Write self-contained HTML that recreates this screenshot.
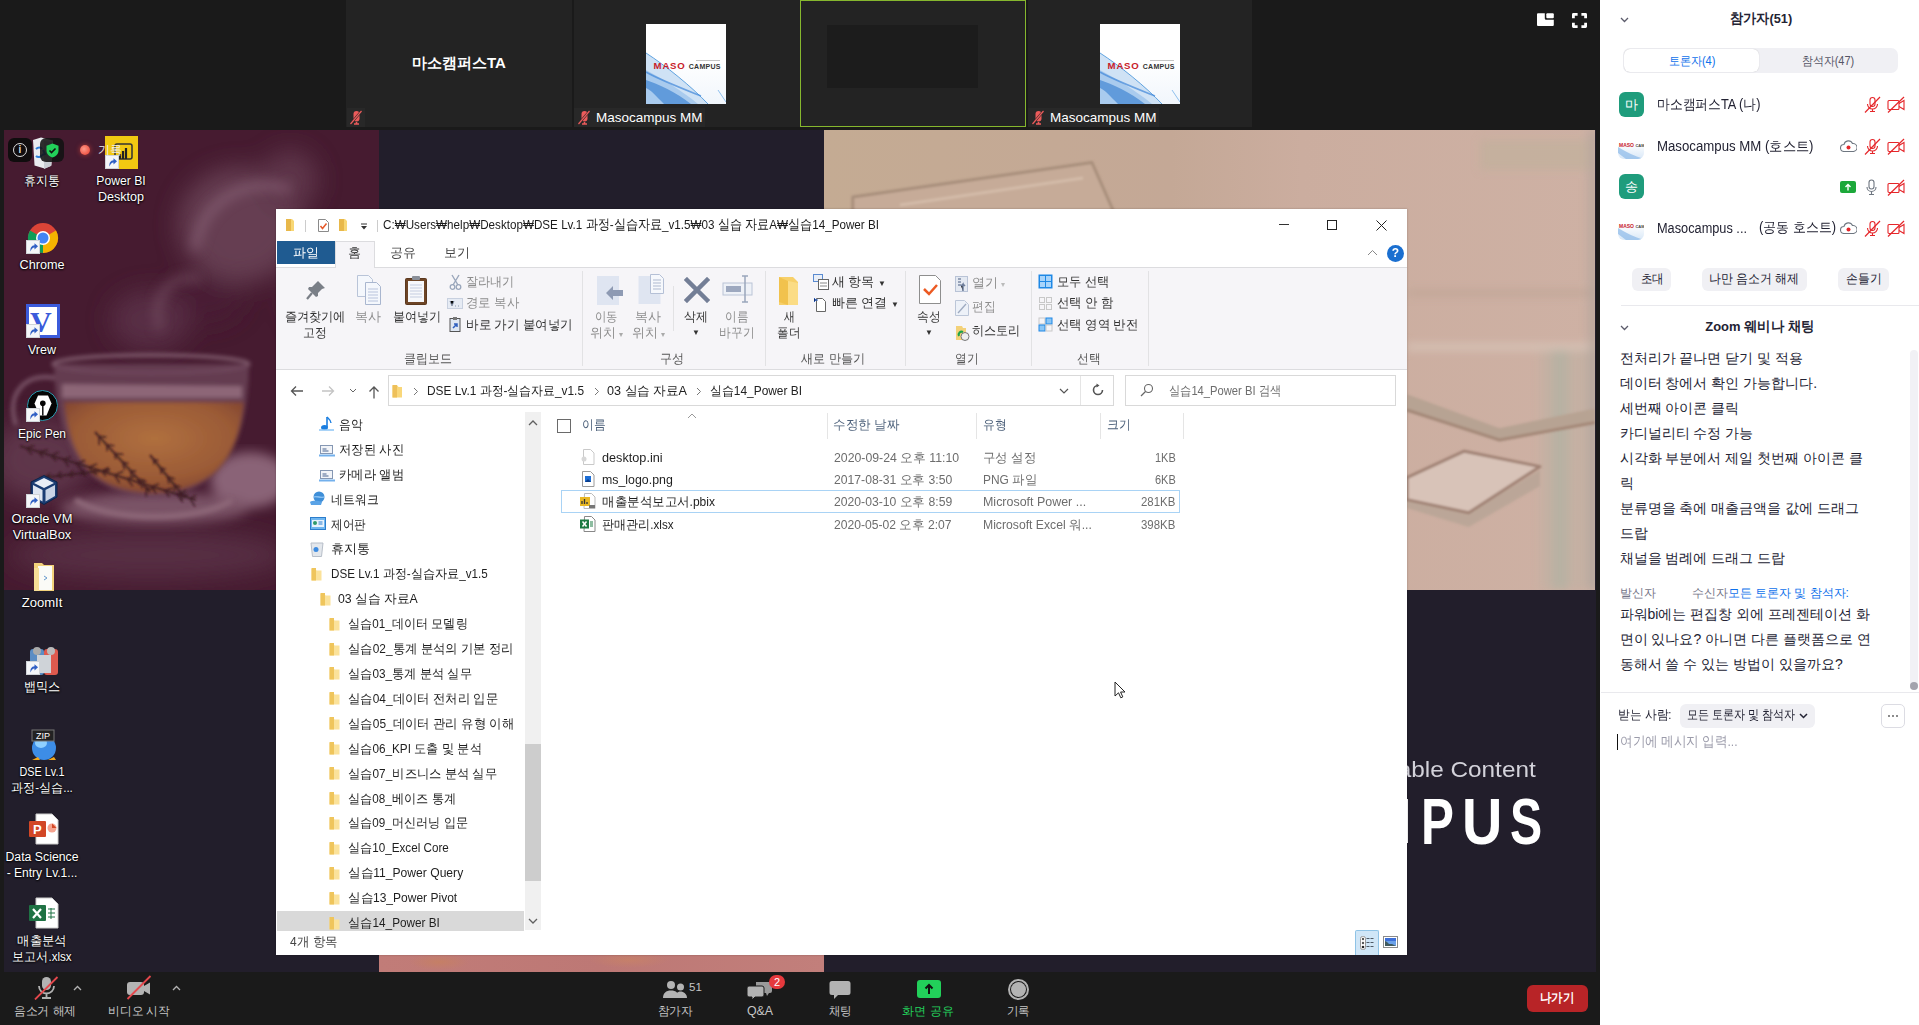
<!DOCTYPE html>
<html><head><meta charset="utf-8">
<style>
*{box-sizing:border-box;margin:0;padding:0}
html,body{width:1919px;height:1025px;overflow:hidden;background:#1a1a1a;font-family:"Liberation Sans",sans-serif;position:relative}
.a{position:absolute}
.t{position:absolute;white-space:nowrap;line-height:1}
/* top strip */
.tile{position:absolute;top:0;height:127px;background:#232323}
/* desktop */
#desk{position:absolute;left:4px;top:130px;width:1592px;height:840px;background:#221e2b;overflow:hidden}
/* explorer */
#ex{position:absolute;left:276px;top:209px;width:1131px;height:746px;background:#fff;font-size:12.5px;color:#222;box-shadow:0 0 2px rgba(0,0,0,.25)}
/* right panel */
#rp{position:absolute;left:1600px;top:0;width:319px;height:1025px;background:#fff;color:#232333}
/* toolbar */
#tb{position:absolute;left:0;top:970px;width:1600px;height:55px;background:#1a1a1a;color:#ccc}

.rb .t{font-size:12.5px;color:#333}
.rb .t.c{transform:translateX(-50%)}
.rb .t.g{color:#8d8d8d}
.rb .t.g2{color:#555}
.hd{font-size:12.5px;color:#4c607a}

.nv{font-size:12.5px;color:#1e1e1e}
.fn{font-size:12.5px;color:#1e1e1e}
.fd{font-size:12.5px;color:#6d6d6d}

.dl{font-size:12.5px;color:#fff;transform:translateX(-50%);text-shadow:0 0 2px #000,0 1px 2px #000}
#desk{height:842px}

.cm{position:absolute;left:19.5px;white-space:nowrap;line-height:1;font-size:14px;color:#232333}
#tb{top:972px;height:53px}
</style></head><body>

<!-- TOP STRIP -->
<div class="tile" style="left:346px;width:226px"></div>
<div class="t" style="left:459px;top:55px;font-size:15px;font-weight:bold;color:#fff;transform:translateX(-50%)">마소캠퍼스TA</div>
<div class="a" style="left:347px;top:108px;width:18px;height:19px;background:#282828"></div>
<svg class="a" style="left:349px;top:110px" width="14" height="15" viewBox="0 0 14 15"><path d="M4.5 4a3 3 0 0 1 6 0v4.5a3 3 0 0 1-6 0z" fill="#ec5b5b"/><path d="M7.5 12v1.5M5 14h5" stroke="#ec5b5b" stroke-width="1.6"/><path d="M12.5 1L1.5 14" stroke="#282828" stroke-width="2.4"/><path d="M12.5 1L1.5 14" stroke="#ec5b5b" stroke-width="1.2"/></svg>
<div class="tile" style="left:574px;width:226px"></div>
<div class="a" style="left:646px;top:24px;width:80px;height:80px;background:linear-gradient(180deg,#fff 0%,#fff 45%,#f1f6fc 100%);overflow:hidden">
    <svg class="a" style="left:0;top:0" width="80" height="80" viewBox="0 0 80 80">
      <path d="M0 29C20 42 45 62 62 80H0z" fill="#cfe2f5"/>
      <path d="M0 29C20 42 45 62 62 80" stroke="#5fa3e0" stroke-width="1" fill="none"/>
      <path d="M0 46C15 54 35 66 52 80H0z" fill="#a9cbee"/>
      <path d="M0 56C12 60 30 68 45 80H18C10 72 5 66 0 64z" fill="#4f8fd6" opacity=".8"/>
      <path d="M0 48C12 55 30 62 55 72" stroke="#3f86d8" stroke-width="1.6" fill="none" opacity=".7"/>
      <path d="M72 66L80 78" stroke="#8fc0ee" stroke-width="1" fill="none"/>
    </svg>
    <div class="t" style="left:7.6px;top:36.6px;font-size:9.6px;font-weight:bold;color:#c8202a;letter-spacing:0.8px">MASO</div>
    <div class="t" style="left:42.7px;top:38.8px;font-size:7px;font-weight:bold;color:#333;letter-spacing:0.3px">CAMPUS</div>
    <div class="a" style="left:50px;top:35.5px;width:24px;height:1px;background:#c4c4c4"></div>
  </div>
<div class="a" style="left:574px;top:108px;width:131px;height:19px;background:#282828"></div>
<svg class="a" style="left:577px;top:110px" width="14" height="15" viewBox="0 0 14 15"><path d="M4.5 4a3 3 0 0 1 6 0v4.5a3 3 0 0 1-6 0z" fill="#ec5b5b"/><path d="M7.5 12v1.5M5 14h5" stroke="#ec5b5b" stroke-width="1.6"/><path d="M12.5 1L1.5 14" stroke="#282828" stroke-width="2.4"/><path d="M12.5 1L1.5 14" stroke="#ec5b5b" stroke-width="1.2"/></svg>
<div class="t" style="left:596px;top:111px;font-size:13.5px;color:#fff">Masocampus MM</div>
<div class="tile" style="left:800px;width:226px;border:1px solid #86b72e"></div>
<div class="a" style="left:827px;top:25px;width:151px;height:63px;background:#1c1c1c"></div>
<div class="tile" style="left:1028px;width:224px"></div>
<div class="a" style="left:1100px;top:24px;width:80px;height:80px;background:linear-gradient(180deg,#fff 0%,#fff 45%,#f1f6fc 100%);overflow:hidden">
    <svg class="a" style="left:0;top:0" width="80" height="80" viewBox="0 0 80 80">
      <path d="M0 29C20 42 45 62 62 80H0z" fill="#cfe2f5"/>
      <path d="M0 29C20 42 45 62 62 80" stroke="#5fa3e0" stroke-width="1" fill="none"/>
      <path d="M0 46C15 54 35 66 52 80H0z" fill="#a9cbee"/>
      <path d="M0 56C12 60 30 68 45 80H18C10 72 5 66 0 64z" fill="#4f8fd6" opacity=".8"/>
      <path d="M0 48C12 55 30 62 55 72" stroke="#3f86d8" stroke-width="1.6" fill="none" opacity=".7"/>
      <path d="M72 66L80 78" stroke="#8fc0ee" stroke-width="1" fill="none"/>
    </svg>
    <div class="t" style="left:7.6px;top:36.6px;font-size:9.6px;font-weight:bold;color:#c8202a;letter-spacing:0.8px">MASO</div>
    <div class="t" style="left:42.7px;top:38.8px;font-size:7px;font-weight:bold;color:#333;letter-spacing:0.3px">CAMPUS</div>
    <div class="a" style="left:50px;top:35.5px;width:24px;height:1px;background:#c4c4c4"></div>
  </div>
<div class="a" style="left:1028px;top:108px;width:131px;height:19px;background:#282828"></div>
<svg class="a" style="left:1031px;top:110px" width="14" height="15" viewBox="0 0 14 15"><path d="M4.5 4a3 3 0 0 1 6 0v4.5a3 3 0 0 1-6 0z" fill="#ec5b5b"/><path d="M7.5 12v1.5M5 14h5" stroke="#ec5b5b" stroke-width="1.6"/><path d="M12.5 1L1.5 14" stroke="#282828" stroke-width="2.4"/><path d="M12.5 1L1.5 14" stroke="#ec5b5b" stroke-width="1.2"/></svg>
<div class="t" style="left:1050px;top:111px;font-size:13.5px;color:#fff">Masocampus MM</div>
<svg class="a" style="left:1536.5px;top:12.5px" width="17" height="13" viewBox="0 0 17 13"><path d="M1 0.3h6.8v5.2a1.3 1.3 0 0 0 1.3 1.3h7.7v5.2a1 1 0 0 1-1 1H1a1 1 0 0 1-1-1V1.3a1 1 0 0 1 1-1z" fill="#fff"/><rect x="9.3" y="0.3" width="7.5" height="5" rx="1" fill="#fff"/></svg>
<svg class="a" style="left:1571.5px;top:12.5px" width="15" height="15" viewBox="0 0 15 15"><path d="M1.4 5.2V1.4h4.2M9.4 1.4h4.2v3.8M13.6 9.8v3.8H9.4M5.6 13.6H1.4V9.8" stroke="#fff" stroke-width="2.8" fill="none" stroke-linejoin="round"/></svg>

<!-- DESKTOP -->
<div id="desk">
  <!-- tea wallpaper -->
  <svg class="a" style="left:0;top:0" width="375" height="460" viewBox="0 0 375 460">
    <defs>
      <filter id="bl2"><feGaussianBlur stdDeviation="2"/></filter><filter id="bl1"><feGaussianBlur stdDeviation="0.8"/></filter>
      <filter id="bl6"><feGaussianBlur stdDeviation="6"/></filter>
      <filter id="bl12"><feGaussianBlur stdDeviation="12"/></filter>
      <radialGradient id="teaG" cx=".5" cy=".4" r=".75"><stop offset="0" stop-color="#b0703f"/><stop offset=".6" stop-color="#9a5a36"/><stop offset="1" stop-color="#73392e"/></radialGradient>
    </defs>
    <rect width="375" height="460" fill="#461b30"/>
    <g filter="url(#bl12)" opacity=".85">
      <ellipse cx="236" cy="95" rx="62" ry="58" fill="#6c4559"/>
      <ellipse cx="286" cy="50" rx="28" ry="30" fill="#633a50"/>
      <ellipse cx="201" cy="170" rx="38" ry="24" fill="#4a1f34"/>
      <ellipse cx="146" cy="190" rx="40" ry="30" fill="#5c3248"/>
      <ellipse cx="326" cy="170" rx="40" ry="40" fill="#5e354b"/>
      <ellipse cx="36" cy="330" rx="50" ry="40" fill="#633a50"/>
      <ellipse cx="146" cy="425" rx="140" ry="25" fill="#5a3046"/>
    </g>
    <g filter="url(#bl6)" opacity=".6">
      <path d="M191 120 C196 70 246 45 286 60" stroke="#8a6478" stroke-width="10" fill="none"/>
      <path d="M156 200 C146 170 166 140 196 150" stroke="#7a5468" stroke-width="8" fill="none"/>
    </g>
    <g filter="url(#bl6)">
      <ellipse cx="246" cy="350" rx="40" ry="28" fill="#8a6477"/>
      <ellipse cx="151" cy="378" rx="95" ry="16" fill="#7a5266"/>
    </g>
    <g filter="url(#bl2)">
      <path d="M12 295 C2 265 20 242 51 248" stroke="#7a5468" stroke-width="4" fill="none"/>
      <ellipse cx="147" cy="234" rx="98" ry="9" fill="none" stroke="#8a6778" stroke-width="3"/>
      <path d="M50 234 C52 310 76 365 148 367 C221 365 244 310 245 234 z" fill="#6c4458" opacity=".8"/>
      <path d="M60 272 C66 332 91 362 148 363 C206 362 234 332 240 272 z" fill="url(#teaG)"/>
      <path d="M58 254 L238 256 L238 268 L58 268 z" fill="#9b7585" opacity=".75"/>
      <path d="M71 370 C106 392 196 392 228 370" stroke="#8c6677" stroke-width="6" fill="none"/>
    </g>
    <g fill="none" opacity=".85" filter="url(#bl1)"><path d="M16 316L192 370" stroke="#3a1a20" stroke-width="2"/><path d="M22.3 317.9L27.8 324.1" stroke="#3a1a20" stroke-width="1.6"/><path d="M22.3 317.9L30.4 315.6" stroke="#3a1a20" stroke-width="1.6"/><path d="M34.9 321.8L38.7 327.1" stroke="#3a1a20" stroke-width="1.6"/><path d="M34.9 321.8L44.0 320.1" stroke="#3a1a20" stroke-width="1.6"/><path d="M47.4 325.6L52.2 331.0" stroke="#3a1a20" stroke-width="1.6"/><path d="M47.4 325.6L54.6 322.2" stroke="#3a1a20" stroke-width="1.6"/><path d="M60.0 329.5L64.3 336.3" stroke="#3a1a20" stroke-width="1.6"/><path d="M60.0 329.5L66.4 327.1" stroke="#3a1a20" stroke-width="1.6"/><path d="M72.6 333.4L78.1 341.0" stroke="#3a1a20" stroke-width="1.6"/><path d="M72.6 333.4L81.1 330.5" stroke="#3a1a20" stroke-width="1.6"/><path d="M85.1 337.2L88.9 342.6" stroke="#3a1a20" stroke-width="1.6"/><path d="M85.1 337.2L93.0 334.0" stroke="#3a1a20" stroke-width="1.6"/><path d="M97.7 341.1L101.9 345.9" stroke="#3a1a20" stroke-width="1.6"/><path d="M97.7 341.1L105.0 337.8" stroke="#3a1a20" stroke-width="1.6"/><path d="M110.3 344.9L115.6 352.7" stroke="#3a1a20" stroke-width="1.6"/><path d="M110.3 344.9L119.2 341.4" stroke="#3a1a20" stroke-width="1.6"/><path d="M122.9 348.8L128.7 355.9" stroke="#3a1a20" stroke-width="1.6"/><path d="M122.9 348.8L132.1 345.9" stroke="#3a1a20" stroke-width="1.6"/><path d="M135.4 352.6L138.9 358.3" stroke="#3a1a20" stroke-width="1.6"/><path d="M135.4 352.6L142.4 351.2" stroke="#3a1a20" stroke-width="1.6"/><path d="M148.0 356.5L152.0 363.3" stroke="#3a1a20" stroke-width="1.6"/><path d="M148.0 356.5L154.9 354.0" stroke="#3a1a20" stroke-width="1.6"/><path d="M160.6 360.4L165.3 366.4" stroke="#3a1a20" stroke-width="1.6"/><path d="M160.6 360.4L168.7 358.1" stroke="#3a1a20" stroke-width="1.6"/><path d="M173.1 364.2L178.8 371.9" stroke="#3a1a20" stroke-width="1.6"/><path d="M173.1 364.2L182.2 360.8" stroke="#3a1a20" stroke-width="1.6"/><path d="M185.7 368.1L191.0 376.4" stroke="#3a1a20" stroke-width="1.6"/><path d="M185.7 368.1L192.2 365.6" stroke="#3a1a20" stroke-width="1.6"/><path d="M91 302L146 362" stroke="#3a1a20" stroke-width="2"/><path d="M94.9 306.3L95.2 315.0" stroke="#3a1a20" stroke-width="1.6"/><path d="M94.9 306.3L102.3 307.1" stroke="#3a1a20" stroke-width="1.6"/><path d="M102.8 314.9L103.2 321.1" stroke="#3a1a20" stroke-width="1.6"/><path d="M102.8 314.9L110.2 315.8" stroke="#3a1a20" stroke-width="1.6"/><path d="M110.6 323.4L111.7 329.1" stroke="#3a1a20" stroke-width="1.6"/><path d="M110.6 323.4L119.3 324.5" stroke="#3a1a20" stroke-width="1.6"/><path d="M118.5 332.0L120.5 339.9" stroke="#3a1a20" stroke-width="1.6"/><path d="M118.5 332.0L124.4 333.5" stroke="#3a1a20" stroke-width="1.6"/><path d="M126.4 340.6L127.9 348.5" stroke="#3a1a20" stroke-width="1.6"/><path d="M126.4 340.6L132.1 341.2" stroke="#3a1a20" stroke-width="1.6"/><path d="M134.2 349.1L134.8 354.9" stroke="#3a1a20" stroke-width="1.6"/><path d="M134.2 349.1L140.8 350.2" stroke="#3a1a20" stroke-width="1.6"/><path d="M142.1 357.7L142.3 366.4" stroke="#3a1a20" stroke-width="1.6"/><path d="M142.1 357.7L150.7 359.6" stroke="#3a1a20" stroke-width="1.6"/><path d="M146 325L181 368" stroke="#3a1a20" stroke-width="2"/><path d="M149.5 329.3L150.1 334.4" stroke="#3a1a20" stroke-width="1.6"/><path d="M149.5 329.3L154.3 330.5" stroke="#3a1a20" stroke-width="1.6"/><path d="M156.5 337.9L157.4 343.9" stroke="#3a1a20" stroke-width="1.6"/><path d="M156.5 337.9L161.7 339.2" stroke="#3a1a20" stroke-width="1.6"/><path d="M163.5 346.5L165.0 353.7" stroke="#3a1a20" stroke-width="1.6"/><path d="M163.5 346.5L170.7 348.9" stroke="#3a1a20" stroke-width="1.6"/><path d="M170.5 355.1L170.3 361.1" stroke="#3a1a20" stroke-width="1.6"/><path d="M170.5 355.1L176.6 356.9" stroke="#3a1a20" stroke-width="1.6"/><path d="M177.5 363.7L177.7 370.3" stroke="#3a1a20" stroke-width="1.6"/><path d="M177.5 363.7L183.9 365.4" stroke="#3a1a20" stroke-width="1.6"/><path d="M36 348L106 340" stroke="#3a1a20" stroke-width="2"/><path d="M41.8 347.3L46.2 350.5" stroke="#3a1a20" stroke-width="1.6"/><path d="M41.8 347.3L46.3 343.5" stroke="#3a1a20" stroke-width="1.6"/><path d="M53.5 346.0L58.0 348.0" stroke="#3a1a20" stroke-width="1.6"/><path d="M53.5 346.0L57.1 341.9" stroke="#3a1a20" stroke-width="1.6"/><path d="M65.2 344.7L68.9 346.7" stroke="#3a1a20" stroke-width="1.6"/><path d="M65.2 344.7L69.4 341.1" stroke="#3a1a20" stroke-width="1.6"/><path d="M76.8 343.3L82.1 345.3" stroke="#3a1a20" stroke-width="1.6"/><path d="M76.8 343.3L80.0 340.3" stroke="#3a1a20" stroke-width="1.6"/><path d="M88.5 342.0L93.1 344.7" stroke="#3a1a20" stroke-width="1.6"/><path d="M88.5 342.0L92.1 338.5" stroke="#3a1a20" stroke-width="1.6"/><path d="M100.2 340.7L105.2 343.8" stroke="#3a1a20" stroke-width="1.6"/><path d="M100.2 340.7L103.8 338.2" stroke="#3a1a20" stroke-width="1.6"/></g>
  </svg>
  <!-- beige photo -->
  <svg class="a" style="left:820px;top:0" width="771" height="460" viewBox="0 0 771 460">
    <defs>
      <linearGradient id="bg1" x1="0" x2="1"><stop offset="0" stop-color="#c4ab93"/><stop offset=".45" stop-color="#c4a896"/><stop offset=".62" stop-color="#cbad9f"/><stop offset="1" stop-color="#ceb1a4"/></linearGradient>
      <filter id="bb1"><feGaussianBlur stdDeviation="1.2"/></filter>
      <filter id="bb4"><feGaussianBlur stdDeviation="4"/></filter>
    </defs>
    <rect width="771" height="460" fill="url(#bg1)"/>
    <g filter="url(#bb4)">
      <rect x="656" y="10" width="110" height="30" fill="#bfb09b" opacity=".6"/>
      <rect x="583" y="160" width="188" height="6" fill="#b9a091" opacity=".6"/>
      <rect x="583" y="213" width="188" height="8" fill="#dccbc0" opacity=".6"/>
      <rect x="716" y="220" width="60" height="240" fill="#c0b0a4" opacity=".6"/>
      <rect x="728" y="220" width="16" height="240" fill="#b6b1a3" opacity=".9"/>
      <rect x="764" y="0" width="10" height="460" fill="#a8a09a" opacity=".5"/>
    </g>
    <g filter="url(#bb1)">
      <polygon points="28.8,67.0 267.9,32.5 289.8,82.0 28.0,82.0" fill="#c6ab98"/>
      <polyline points="28.8,82.0 28.8,67.0 267.9,32.5 289.8,82.0" fill="none" stroke="#a88f7c" stroke-width="3" stroke-linejoin="round"/>
      <polyline points="76.0,75.0 259.0,48.0" fill="none" stroke="#d3bba9" stroke-width="3"/>
      <polygon points="583.0,264.2 675.4,298.2 771.0,278.4 771.0,293.8 675.4,311.4 583.0,281.7" fill="#b7a393"/>
      <polyline points="583.0,280.0 675.4,310.0 771.0,292.5" fill="none" stroke="#a48878" stroke-width="3"/>
      <polygon points="583.0,378.0 644.7,397.0 716.0,356.0 716.0,340.0 644.7,382.7 583.0,369.6" fill="#b9a597" opacity=".9"/>
      <polygon points="583.0,347.6 640.3,321.2 716.0,336.6 644.7,382.7 583.0,369.6" fill="#d8c3b8" stroke="#a08274" stroke-width="3" stroke-linejoin="round"/>
    </g>
  </svg>
  <!-- pink strip -->
  <div class="a" style="left:375px;top:820px;width:445px;height:22px;background:radial-gradient(ellipse 30px 8px at 60px 12px,rgba(200,130,90,.6),transparent),radial-gradient(ellipse 40px 8px at 250px 10px,rgba(205,135,95,.5),transparent),linear-gradient(90deg,#c17c78,#bd7875 50%,#c27f7b)"></div>
  <!-- MASO CAMPUS text -->
  <div class="t" style="left:1325.5px;top:629px;font-size:22.5px;color:#d3d2da;transform:scaleX(1.082);transform-origin:left top">Actionable Content</div>
  <div class="a" style="left:1399px;top:668.5px;width:5px;height:44.5px;background:#fff"></div>
  <div class="t" style="left:1416.9px;top:659.5px;font-size:64.7px;font-weight:bold;color:#fff;transform:scaleX(.764);transform-origin:left top">P</div>
  <div class="t" style="left:1458.1px;top:659.5px;font-size:64.7px;font-weight:bold;color:#fff;transform:scaleX(.863);transform-origin:left top">U</div>
  <div class="t" style="left:1505.5px;top:659.5px;font-size:64.7px;font-weight:bold;color:#fff;transform:scaleX(.745);transform-origin:left top">S</div>
  <svg class="a" style="left:27px;top:6.5px" width="24" height="32" viewBox="0 0 24 32"><path d="M2 3l8-2.5 12 3-1.5 25-7 3-10-3z" fill="#e9ecef"/><path d="M13 4l8 1-1 24-7 3z" fill="#c9ced4"/><path d="M5 12c2-2 5-2 6 0M11 18c-1 2-4 3-6 1M12 13l2 4-3 1" stroke="#2d7fd8" stroke-width="2" fill="none"/></svg>
  <div class="a" style="left:4px;top:8px;width:23.5px;height:23.5px;border-radius:6px;background:rgba(12,12,12,.92)"></div>
  <div class="a" style="left:8.8px;top:12.8px;width:14.4px;height:14.4px;border-radius:50%;border:1.2px solid #ddd;color:#ddd;font-size:10px;line-height:12px;text-align:center;font-weight:bold">i</div>
  <div class="a" style="left:36.4px;top:8px;width:23.6px;height:23.5px;border-radius:6px;background:rgba(18,18,18,.88)"></div>
  <svg class="a" style="left:41.6px;top:12.5px" width="13" height="15" viewBox="0 0 13 15"><path d="M6.5 0.5L12.5 2.8V7.5c0 3.4-2.6 6-6 7C3.1 13.5 0.5 10.9 0.5 7.5V2.8z" fill="#22d05a"/><path d="M3.5 7.5l2 2 4-4" stroke="#111" stroke-width="1.6" fill="none"/></svg>
  <div class="a" style="left:76px;top:15px;width:10px;height:10px;border-radius:50%;background:radial-gradient(circle at 40% 40%,#ff9a8a,#e83a2a);box-shadow:0 0 5px rgba(255,80,60,.6)"></div>
  <div class="a" style="left:100.8px;top:6px;width:33.2px;height:33px;background:#f2c811"></div>
  <svg class="a" style="left:108px;top:12px" width="22" height="20" viewBox="0 0 22 20"><rect x="3" y="2" width="17" height="15" rx="2" fill="none" stroke="#333" stroke-width="1.5"/><path d="M8 17v-5M11 17V9M14 17V6" stroke="#222" stroke-width="2.2"/></svg>
  <svg class="a" style="left:101px;top:25.3px" width="14" height="14" viewBox="0 0 14 14"><rect x="0.5" y="0.5" width="13" height="13" fill="#f4f6f8" stroke="#d0d4d8"/><path d="M4.5 11.5C4 8 5.5 5.5 8.5 5.2V3.2L12 6.3 8.5 9.4V7.4C6.5 7.5 5.2 9 4.5 11.5z" fill="#2f5fc4"/></svg>
  <div class="t" style="left:94.4px;top:13.5px;font-size:12px;color:#eee">기록</div>
  <div class="t dl" style="left:38px;top:44.5px;transform:translateX(-50%) scaleX(0.917949);transform-origin:center top">휴지통</div>
  <div class="t dl" style="left:117px;top:44.5px;transform:translateX(-50%) scaleX(0.973999);transform-origin:center top">Power BI</div>
  <div class="t dl" style="left:117px;top:60.5px;transform:translateX(-50%) scaleX(1.00525);transform-origin:center top">Desktop</div>
  <svg class="a" style="left:23px;top:92px" width="32" height="32" viewBox="0 0 32 32"><circle cx="16" cy="16" r="15" fill="#db4437"/><path d="M16 16L3 23.5A15 15 0 0 0 16 31z" fill="#0f9d58"/><path d="M16 16L3 23.5A15 15 0 0 1 3 8.5z" fill="#0f9d58"/><path d="M16 16l13-7.5A15 15 0 0 1 16 31z" fill="#f4b400"/><circle cx="16" cy="16" r="7" fill="#fff"/><circle cx="16" cy="16" r="5.5" fill="#4285f4"/></svg>
  <svg class="a" style="left:22px;top:109.5px" width="14" height="14" viewBox="0 0 14 14"><rect x="0.5" y="0.5" width="13" height="13" fill="#f4f6f8" stroke="#d0d4d8"/><path d="M4.5 11.5C4 8 5.5 5.5 8.5 5.2V3.2L12 6.3 8.5 9.4V7.4C6.5 7.5 5.2 9 4.5 11.5z" fill="#2f5fc4"/></svg>
  <div class="t dl" style="left:38px;top:128.5px;transform:translateX(-50%) scaleX(1.01195);transform-origin:center top">Chrome</div>
  <div class="a" style="left:22px;top:174px;width:34px;height:34px;background:#fff;border:3px solid #3b5bdb"></div>
  <div class="t" style="left:26px;top:177px;font-size:30px;font-weight:bold;color:#3b5bdb;font-family:Liberation Serif,serif">V</div>
  <svg class="a" style="left:22px;top:194px" width="14" height="14" viewBox="0 0 14 14"><rect x="0.5" y="0.5" width="13" height="13" fill="#f4f6f8" stroke="#d0d4d8"/><path d="M4.5 11.5C4 8 5.5 5.5 8.5 5.2V3.2L12 6.3 8.5 9.4V7.4C6.5 7.5 5.2 9 4.5 11.5z" fill="#2f5fc4"/></svg>
  <div class="t dl" style="left:38px;top:213.5px;transform:translateX(-50%) scaleX(0.999442);transform-origin:center top">Vrew</div>
  <div class="a" style="left:23.3px;top:260.3px;width:31px;height:31px;border-radius:50%;background:#050505;border:1.6px solid #2a9bb0"></div>
  <svg class="a" style="left:30px;top:265px" width="18" height="22" viewBox="0 0 18 22"><path d="M4 0.5h10l3.5 8-5 12h-7l-5-12z" fill="#fff"/><circle cx="8.8" cy="8.2" r="2.8" fill="#050505"/><path d="M8.8 9v11.5" stroke="#050505" stroke-width="1.4"/></svg>
  <svg class="a" style="left:22.4px;top:278px" width="14" height="14" viewBox="0 0 14 14"><rect x="0.5" y="0.5" width="13" height="13" fill="#f4f6f8" stroke="#d0d4d8"/><path d="M4.5 11.5C4 8 5.5 5.5 8.5 5.2V3.2L12 6.3 8.5 9.4V7.4C6.5 7.5 5.2 9 4.5 11.5z" fill="#2f5fc4"/></svg>
  <div class="t dl" style="left:38px;top:297.5px;transform:translateX(-50%) scaleX(0.961399);transform-origin:center top">Epic Pen</div>
  <svg class="a" style="left:25px;top:344px" width="30" height="32" viewBox="0 0 30 32"><path d="M15 1.5l13 6.5v15l-13 7.5-13-7.5V8z" fill="#1b3d73" stroke="#0e2347" stroke-width="1"/><path d="M15 4l10 5-10 5L5 9z" fill="#e9eef6"/><path d="M4 11l9.5 5v11.5L4 22z" fill="#dfe6f1"/><path d="M26 11l-9.5 5v11.5L26 22z" fill="#c9d4e6"/></svg>
  <svg class="a" style="left:21.5px;top:363.5px" width="14" height="14" viewBox="0 0 14 14"><rect x="0.5" y="0.5" width="13" height="13" fill="#f4f6f8" stroke="#d0d4d8"/><path d="M4.5 11.5C4 8 5.5 5.5 8.5 5.2V3.2L12 6.3 8.5 9.4V7.4C6.5 7.5 5.2 9 4.5 11.5z" fill="#2f5fc4"/></svg>
  <div class="t dl" style="left:38px;top:382.5px;transform:translateX(-50%) scaleX(1.02969);transform-origin:center top">Oracle VM</div>
  <div class="t dl" style="left:38px;top:398.5px;transform:translateX(-50%) scaleX(1.0326);transform-origin:center top">VirtualBox</div>
  <svg class="a" style="left:28px;top:430px" width="24" height="32" viewBox="0 0 24 32"><path d="M2 3h8l2 2h10v26H2z" fill="#f3d27b"/><path d="M6 6h14v24H6z" fill="#fbfbf7"/><path d="M2 8h5v23H2z" fill="#f7de96"/><path d="M12 16l3 2-3 2" stroke="#69c" fill="none"/></svg>
  <div class="t dl" style="left:38px;top:466.5px;transform:translateX(-50%) scaleX(1.0461);transform-origin:center top">ZoomIt</div>
  <svg class="a" style="left:24px;top:515px" width="32" height="32" viewBox="0 0 32 32"><rect x="2" y="4" width="14" height="26" rx="3" fill="#5c8dc4"/><rect x="16" y="4" width="14" height="26" rx="3" fill="#de5a4e"/><path d="M9 10h14v18H9z" fill="#cfd3d8"/><circle cx="9" cy="6" r="4" fill="#aaa"/><circle cx="23" cy="6" r="4" fill="#bbb"/></svg>
  <svg class="a" style="left:22px;top:531px" width="14" height="14" viewBox="0 0 14 14"><rect x="0.5" y="0.5" width="13" height="13" fill="#f4f6f8" stroke="#d0d4d8"/><path d="M4.5 11.5C4 8 5.5 5.5 8.5 5.2V3.2L12 6.3 8.5 9.4V7.4C6.5 7.5 5.2 9 4.5 11.5z" fill="#2f5fc4"/></svg>
  <div class="t dl" style="left:38px;top:550.5px;transform:translateX(-50%) scaleX(0.935897);transform-origin:center top">뱁믹스</div>
  <svg class="a" style="left:24px;top:598px" width="32" height="34" viewBox="0 0 32 34"><ellipse cx="16" cy="20" rx="12" ry="12" fill="#3d8de6"/><ellipse cx="13" cy="15" rx="6" ry="5" fill="#8fd0ff"/><path d="M4 32h8l-2-3zM20 32h8l-2-3z" fill="#f0a81e"/><rect x="4" y="2" width="22" height="11" fill="#222" stroke="#777"/><text x="8" y="11" font-size="9" fill="#fff" font-family="Liberation Sans">ZIP</text></svg>
  <div class="t dl" style="left:38px;top:635.5px;transform:translateX(-50%) scaleX(0.865542);transform-origin:center top">DSE Lv.1</div>
  <div class="t dl" style="left:38px;top:651.5px;transform:translateX(-50%) scaleX(0.926513);transform-origin:center top">과정-실습...</div>
  <svg class="a" style="left:24px;top:683px" width="32" height="32" viewBox="0 0 32 32"><path d="M8 1h16l6 6v24H8z" fill="#fff" stroke="#ccc"/><rect x="1" y="8" width="17" height="16" rx="1" fill="#d24726"/><text x="5" y="21" font-size="13" font-weight="bold" fill="#fff" font-family="Liberation Sans">P</text><circle cx="24" cy="15" r="4.5" fill="#f5a38f"/><path d="M24 10.5V15h4.5" fill="#d24726"/></svg>
  <div class="t dl" style="left:38px;top:720.5px;transform:translateX(-50%) scaleX(0.981719);transform-origin:center top">Data Science</div>
  <div class="t dl" style="left:38px;top:736.5px;transform:translateX(-50%) scaleX(0.963133);transform-origin:center top">- Entry Lv.1...</div>
  <svg class="a" style="left:24px;top:767px" width="32" height="32" viewBox="0 0 32 32"><path d="M8 1h16l6 6v24H8z" fill="#fff" stroke="#ccc"/><rect x="1" y="8" width="17" height="16" rx="1" fill="#1f7244"/><path d="M5 12l8 9M13 12l-8 9" stroke="#fff" stroke-width="2.2"/><path d="M20 12h7M20 16h7M20 20h7M23 11v11" stroke="#1f7244"/></svg>
  <div class="t dl" style="left:38px;top:804.5px;transform:translateX(-50%) scaleX(0.957692);transform-origin:center top">매출분석</div>
  <div class="t dl" style="left:38px;top:820.5px;transform:translateX(-50%) scaleX(0.923438);transform-origin:center top">보고서.xlsx</div>
</div>

<!-- EXPLORER -->

<div id="ex">
  <!-- title bar -->
  <svg class="a" style="left:9px;top:9px" width="12" height="14" viewBox="0 0 12 14"><path d="M1 1h6l2 2v10H1z" fill="#f8d775"/><path d="M1 1h5v12H1z" fill="#e8b84a"/></svg>
  <div class="a" style="left:29px;top:11px;width:1px;height:12px;background:#ccc"></div>
  <svg class="a" style="left:41px;top:9px" width="13" height="15" viewBox="0 0 13 15"><path d="M1.5 1.5h7l3 3v9h-10z" fill="#fff" stroke="#8a8a8a"/><path d="M3.5 8l2 2.5 4-5" stroke="#e65a2a" stroke-width="1.5" fill="none"/></svg>
  <svg class="a" style="left:62px;top:9px" width="12" height="14" viewBox="0 0 12 14"><path d="M1 1h6l2 2v10H1z" fill="#f8d775"/><path d="M1 1h5v12H1z" fill="#e8b84a"/></svg>
  <svg class="a" style="left:84px;top:14px" width="8" height="7" viewBox="0 0 8 7"><path d="M1 1h6" stroke="#333"/><path d="M1 3h6L4 6.5z" fill="#333"/></svg>
  <div class="a" style="left:101px;top:11px;width:1px;height:12px;background:#ccc"></div>
  <div class="t" style="left:107px;top:9px;font-size:13.5px;color:#1a1a1a;transform:scaleX(0.863547);transform-origin:left top">C:₩Users₩help₩Desktop₩DSE Lv.1 과정-실습자료_v1.5₩03 실습 자료A₩실습14_Power BI</div>
  <div class="a" style="left:1003px;top:15px;width:10px;height:1px;background:#333"></div>
  <div class="a" style="left:1051px;top:11px;width:10px;height:10px;border:1px solid #222"></div>
  <svg class="a" style="left:1099.5px;top:10.5px" width="11" height="11" viewBox="0 0 11 11"><path d="M0.5 0.5L10.5 10.5M10.5 0.5L0.5 10.5" stroke="#222" stroke-width="1"/></svg>
  <!-- tabs -->
  <div class="a" style="left:1px;top:32px;width:58px;height:23px;background:#1f5b91"></div>
  <div class="t" style="left:17px;top:37px;font-size:13px;color:#fff">파일</div>
  <div class="a" style="left:59px;top:32px;width:40px;height:27px;background:#f6f5f8;border:1px solid #dcdcdf;border-bottom:none;z-index:2"></div>
  <div class="t" style="left:72px;top:37px;font-size:13px;color:#333;z-index:3">홈</div>
  <div class="t" style="left:114px;top:37px;font-size:13px;color:#444">공유</div>
  <div class="t" style="left:168px;top:37px;font-size:13px;color:#444">보기</div>
  <svg class="a" style="left:1091px;top:40px" width="11" height="7" viewBox="0 0 11 7"><path d="M1 6l4.5-4.5L10 6" stroke="#888" fill="none"/></svg>
  <div class="a" style="left:1111px;top:36px;width:17px;height:17px;border-radius:50%;background:#1a6fd0;color:#fff;font-size:12px;font-weight:bold;text-align:center;line-height:17px">?</div>
  <!-- ribbon -->
  <div class="a" style="left:0;top:58px;width:1131px;height:103px;background:#f6f5f8;border-top:1px solid #dcdcdf;border-bottom:1px solid #dcdcdf"></div>
  <div class="a" style="left:306px;top:62px;width:1px;height:95px;background:#e2e2e4"></div>
  <div class="a" style="left:489px;top:62px;width:1px;height:95px;background:#e2e2e4"></div>
  <div class="a" style="left:629px;top:62px;width:1px;height:95px;background:#e2e2e4"></div>
  <div class="a" style="left:755px;top:62px;width:1px;height:95px;background:#e2e2e4"></div>
  <div class="a" style="left:872px;top:62px;width:1px;height:95px;background:#e2e2e4"></div>
  <div class="a" style="left:397px;top:77px;width:1px;height:45px;background:#e2e2e4"></div>
  <div class="rb">
  <!-- clipboard group -->
  <svg class="a" style="left:29px;top:70px" width="22" height="22" viewBox="0 0 22 22"><path d="M13 2l7 7-3 1-4 4 0 3-2 1-8-8 1-2 3 0 4-4z" fill="#7a7f87"/><path d="M7 14L2 20" stroke="#7a7f87" stroke-width="2.2"/></svg>
  <div class="t c" style="left:39px;top:102px;transform:translateX(-50%) scaleX(0.938462);transform-origin:center top">즐겨찾기에</div>
  <div class="t c" style="left:39px;top:118px;transform:translateX(-50%) scaleX(0.919231);transform-origin:center top">고정</div>
  <svg class="a" style="left:80px;top:65px" width="27" height="32" viewBox="0 0 27 32"><path d="M1.5 1.5h11l4 4v17h-15z" fill="#f4f7fc" stroke="#b9c4d8"/><path d="M9.5 8.5h11l4 4v18h-15z" fill="#f4f7fc" stroke="#a9b6cf"/><path d="M12 15h10M12 18h10M12 21h10M12 24h10M12 27h10" stroke="#b8c3dc"/></svg>
  <div class="t c g" style="left:92px;top:102px">복사</div>
  <svg class="a" style="left:128px;top:65px" width="24" height="32" viewBox="0 0 24 32"><rect x="1.5" y="4.5" width="21" height="26" rx="1" fill="#6e4526" stroke="#5b381e"/><rect x="4" y="7" width="16" height="21" fill="#f7f8fb"/><path d="M6 11h12M6 14h12M6 17h12M6 20h12M6 23h12" stroke="#c5cde0"/><rect x="8" y="2" width="8" height="4" rx="1" fill="#8a8f99"/></svg>
  <div class="t c" style="left:141px;top:102px;transform:translateX(-50%) scaleX(0.932692);transform-origin:center top">붙여넣기</div>
  <svg class="a" style="left:173px;top:65px" width="13" height="16" viewBox="0 0 13 16"><path d="M3 1l6 10M10 1L4 11" stroke="#9aa6bb" stroke-width="1.4"/><circle cx="3.5" cy="13" r="2.3" fill="none" stroke="#9aa6bb" stroke-width="1.3"/><circle cx="9.5" cy="13" r="2.3" fill="none" stroke="#9aa6bb" stroke-width="1.3"/></svg>
  <div class="t g" style="left:190px;top:67px;transform:scaleX(0.930769);transform-origin:left top">잘라내기</div>
  <svg class="a" style="left:171px;top:89px" width="16" height="11" viewBox="0 0 16 11"><rect x="0.5" y="0.5" width="15" height="10" fill="#e6ebf4" stroke="#c8d0df"/><path d="M3 3l2 5 2-5M8 8h1M11 8h1" stroke="#8a97ad"/></svg>
  <div class="t g" style="left:190px;top:88px;transform:scaleX(0.955224);transform-origin:left top">경로 복사</div>
  <svg class="a" style="left:173px;top:107px" width="12" height="16" viewBox="0 0 12 16"><rect x="1" y="2.5" width="10" height="13" fill="#dfe7f3" stroke="#555"/><rect x="4" y="1" width="4" height="3" fill="#777"/><path d="M4 12l4-4M5 8h3v3" stroke="#2f5fbf" stroke-width="1.5" fill="none"/></svg>
  <div class="t" style="left:190px;top:110px;transform:scaleX(0.964371);transform-origin:left top">바로 가기 붙여넣기</div>
  <div class="t c g2" style="left:152px;top:144px;transform:translateX(-50%) scaleX(0.923077);transform-origin:center top">클립보드</div>
  <!-- organize -->
  <svg class="a" style="left:320px;top:66px" width="28" height="31" viewBox="0 0 28 31"><rect x="1" y="1" width="22" height="29" fill="#dfe5f1"/><path d="M10 18l7-7v4h10v6H17v4z" fill="#8e9ab3"/></svg>
  <div class="t c g" style="left:330px;top:102px;transform:translateX(-50%) scaleX(0.873077);transform-origin:center top">이동</div>
  <div class="t c g" style="left:330.5px;top:118px">위치 <span style="font-size:8px;color:#aaa">▾</span></div>
  <svg class="a" style="left:362px;top:65px" width="28" height="31" viewBox="0 0 28 31"><rect x="0.5" y="2" width="22" height="28" fill="#dfe5f1"/><path d="M12.5 0.5h9l4 4v15h-13z" fill="#f6f8fc" stroke="#b5c0d6"/><path d="M15 6h8M15 9h8M15 12h8M15 15h8" stroke="#aeb9cf"/></svg>
  <div class="t c g" style="left:372px;top:102px">복사</div>
  <div class="t c g" style="left:372.5px;top:118px">위치 <span style="font-size:8px;color:#aaa">▾</span></div>
  <svg class="a" style="left:408px;top:68px" width="26" height="26" viewBox="0 0 26 26"><path d="M3 3L23 23M23 3L3 23" stroke="#737e96" stroke-width="4.5" stroke-linecap="square"/></svg>
  <div class="t c" style="left:420px;top:102px;transform:translateX(-50%) scaleX(0.915385);transform-origin:center top">삭제</div>
  <div class="t c" style="left:420px;top:120px;font-size:8px">▼</div>
  <svg class="a" style="left:722px;top:66px;left:446px" width="31" height="28" viewBox="0 0 31 28"><rect x="1" y="8" width="29" height="12" fill="#eef1f7" stroke="#bac4d6"/><rect x="4" y="11" width="15" height="6" fill="#9da8bf"/><path d="M20 1h6M23 1v26M20 27h6" stroke="#9aa6bc" stroke-width="1.5"/></svg>
  <div class="t c g" style="left:461px;top:102px;transform:translateX(-50%) scaleX(0.888462);transform-origin:center top">이름</div>
  <div class="t c g" style="left:461px;top:118px;transform:translateX(-50%) scaleX(0.902564);transform-origin:center top">바꾸기</div>
  <div class="t c g2" style="left:396px;top:144px;transform:translateX(-50%) scaleX(0.930769);transform-origin:center top">구성</div>
  <!-- new -->
  <svg class="a" style="left:502px;top:67px" width="21" height="30" viewBox="0 0 21 30"><path d="M1 1h14l5 5v23H1z" fill="#f7d06a"/><path d="M1 1l9 4v24l-9-3z" fill="#f1c24d"/><path d="M10 5l10 2v22H10z" fill="#fbdc85"/></svg>
  <div class="t c" style="left:513px;top:102px;transform:translateX(-50%) scaleX(0.838462);transform-origin:center top">새</div>
  <div class="t c" style="left:513px;top:118px;transform:translateX(-50%) scaleX(0.888462);transform-origin:center top">폴더</div>
  <svg class="a" style="left:537px;top:65px" width="16" height="16" viewBox="0 0 16 16"><rect x="0.5" y="0.5" width="9" height="7" fill="#e9eef7" stroke="#5a8ad0"/><rect x="5.5" y="5.5" width="10" height="10" fill="#fff" stroke="#666"/><path d="M7 9h7M7 12h7" stroke="#888"/></svg>
  <div class="t" style="left:556px;top:67px">새 항목 <span style="font-size:8px">▼</span></div>
  <svg class="a" style="left:537px;top:87px" width="14" height="16" viewBox="0 0 14 16"><path d="M3.5 2.5h6l3 3v10h-9z" fill="#fff" stroke="#666"/><path d="M1 4h4M1 2l2 2-2 2" stroke="#2c5fc0"/></svg>
  <div class="t" style="left:556px;top:88px">빠른 연결 <span style="font-size:8px">▼</span></div>
  <div class="t c g2" style="left:557px;top:144px;transform:translateX(-50%) scaleX(0.93598);transform-origin:center top">새로 만들기</div>
  <!-- open -->
  <svg class="a" style="left:642px;top:65px" width="24" height="31" viewBox="0 0 24 31"><path d="M1.5 1.5h16l5 5v23h-21z" fill="#fff" stroke="#8e8e8e"/><path d="M6 15l5 5 8-9" stroke="#ec5a23" stroke-width="2.5" fill="none"/></svg>
  <div class="t c" style="left:653px;top:102px;transform:translateX(-50%) scaleX(0.9);transform-origin:center top">속성</div>
  <div class="t c" style="left:653px;top:120px;font-size:8px">▼</div>
  <svg class="a" style="left:679px;top:67px" width="14" height="16" viewBox="0 0 14 16"><rect x="0.5" y="0.5" width="12" height="15" fill="#e4e9f2" stroke="#b9c3d6"/><path d="M3 3h3M3 6h3M3 9h3" stroke="#7c8aa6" stroke-width="1.5"/><path d="M8 15V8l-2 2M8 8l2 2" stroke="#6f7f9c" stroke-width="1.5"/></svg>
  <div class="t g" style="left:696px;top:68px">열기 <span style="font-size:8px;color:#bbb">▾</span></div>
  <svg class="a" style="left:679px;top:91px" width="14" height="16" viewBox="0 0 14 16"><path d="M0.5 0.5h9l4 4v11H0.5z" fill="#edf1f8" stroke="#bcc6d8"/><path d="M3 13l8-9" stroke="#9eaac0" stroke-width="1.3"/></svg>
  <div class="t g" style="left:696px;top:92px;transform:scaleX(0.9);transform-origin:left top">편집</div>
  <svg class="a" style="left:679px;top:116px" width="15" height="16" viewBox="0 0 15 16"><path d="M1 1h6l1 2h3v12H1z" fill="#f3d179"/><circle cx="10" cy="11.5" r="4" fill="#eee" stroke="#777"/><path d="M4 11a3 3 0 0 1 4 -4" stroke="#1ca34a" stroke-width="2.2" fill="none"/></svg>
  <div class="t" style="left:696px;top:116px;transform:scaleX(0.932692);transform-origin:left top">히스토리</div>
  <div class="t c g2" style="left:691px;top:144px;transform:translateX(-50%) scaleX(0.9);transform-origin:center top">열기</div>
  <!-- select -->
  <svg class="a" style="left:762px;top:65px" width="15" height="15" viewBox="0 0 15 15"><rect x="0.5" y="0.5" width="14" height="14" fill="#1e88e5"/><rect x="2" y="2" width="5" height="5" fill="#a8d4fb"/><rect x="8" y="2" width="5" height="5" fill="#a8d4fb"/><rect x="2" y="8" width="5" height="5" fill="#a8d4fb"/><rect x="8" y="8" width="5" height="5" fill="#a8d4fb"/></svg>
  <div class="t" style="left:781px;top:67px;transform:scaleX(0.94441);transform-origin:left top">모두 선택</div>
  <svg class="a" style="left:762px;top:87px" width="15" height="15" viewBox="0 0 15 15"><rect x="1.5" y="1.5" width="5" height="5" fill="none" stroke="#c8c8c8"/><rect x="8.5" y="1.5" width="5" height="5" fill="none" stroke="#c8c8c8"/><rect x="1.5" y="8.5" width="5" height="5" fill="none" stroke="#c8c8c8"/><rect x="8.5" y="8.5" width="5" height="5" fill="none" stroke="#c8c8c8"/></svg>
  <div class="t" style="left:781px;top:88px;transform:scaleX(0.954996);transform-origin:left top">선택 안 함</div>
  <svg class="a" style="left:762px;top:108px" width="15" height="15" viewBox="0 0 15 15"><rect x="1" y="1" width="6" height="6" fill="none" stroke="#c8c8c8"/><rect x="8" y="1" width="6" height="6" fill="#8cc6f5" stroke="#1e88e5"/><rect x="1" y="8" width="6" height="6" fill="#8cc6f5" stroke="#1e88e5"/><rect x="8" y="8" width="6" height="6" fill="none" stroke="#c8c8c8"/></svg>
  <div class="t" style="left:781px;top:110px;transform:scaleX(0.956998);transform-origin:left top">선택 영역 반전</div>
  <div class="t c g2" style="left:813px;top:144px;transform:translateX(-50%) scaleX(0.907692);transform-origin:center top">선택</div>
  </div>
  <!-- address row -->
  <svg class="a" style="left:14px;top:176px" width="14" height="12" viewBox="0 0 14 12"><path d="M13 6H2M6 1.5L1.5 6 6 10.5" stroke="#555" stroke-width="1.3" fill="none"/></svg>
  <svg class="a" style="left:45px;top:176px" width="14" height="12" viewBox="0 0 14 12"><path d="M1 6h11M8 1.5L12.5 6 8 10.5" stroke="#c4c4c4" stroke-width="1.3" fill="none"/></svg>
  <svg class="a" style="left:73px;top:179px" width="8" height="6" viewBox="0 0 8 6"><path d="M1 1l3 3 3-3" stroke="#666" fill="none"/></svg>
  <svg class="a" style="left:92px;top:176px" width="12" height="14" viewBox="0 0 12 14"><path d="M6 13.5V2M1.5 6.5L6 2l4.5 4.5" stroke="#555" stroke-width="1.3" fill="none"/></svg>
  <div class="a" style="left:112px;top:166px;width:726px;height:31px;border:1px solid #d9d9d9;background:#fff"></div>
  <div class="a" style="left:804px;top:167px;width:1px;height:29px;background:#e5e5e5"></div>
  <svg class="a" style="left:116px;top:175px" width="11" height="14" viewBox="0 0 11 14"><path d="M0.5 1.5h5l1 1.5h3.5v10.5H0.5z" fill="#f9d77a"/><path d="M0.5 1h4.5v12.5H0.5z" fill="#eec05a"/></svg>
  <svg class="a" style="left:137px;top:178px" width="6" height="9" viewBox="0 0 6 9"><path d="M1 1l3.5 3.5L1 8" stroke="#777" fill="none"/></svg>
  <div class="t" style="left:151px;top:175px;font-size:13px;transform:scaleX(0.914369);transform-origin:left top">DSE Lv.1 과정-실습자료_v1.5</div>
  <svg class="a" style="left:318px;top:178px" width="6" height="9" viewBox="0 0 6 9"><path d="M1 1l3.5 3.5L1 8" stroke="#777" fill="none"/></svg>
  <div class="t" style="left:331px;top:175px;font-size:13px;transform:scaleX(0.971353);transform-origin:left top">03 실습 자료A</div>
  <svg class="a" style="left:420px;top:178px" width="6" height="9" viewBox="0 0 6 9"><path d="M1 1l3.5 3.5L1 8" stroke="#777" fill="none"/></svg>
  <div class="t" style="left:434px;top:175px;font-size:13px;transform:scaleX(0.915993);transform-origin:left top">실습14_Power BI</div>
  <svg class="a" style="left:783px;top:179px" width="10" height="7" viewBox="0 0 10 7"><path d="M1 1l4 4 4-4" stroke="#555" stroke-width="1.2" fill="none"/></svg>
  <svg class="a" style="left:815px;top:174px" width="14" height="14" viewBox="0 0 14 14"><path d="M11.5 7A4.5 4.5 0 1 1 7 2.5" stroke="#555" stroke-width="1.6" fill="none"/><path d="M5.5 0.5L8.5 2.5 5.5 4.5z" fill="#555"/></svg>
  <div class="a" style="left:849px;top:166px;width:271px;height:31px;border:1px solid #d9d9d9;background:#fff"></div>
  <svg class="a" style="left:864px;top:174px" width="14" height="14" viewBox="0 0 14 14"><circle cx="8.5" cy="5.5" r="4" stroke="#666" stroke-width="1.1" fill="none"/><path d="M5.5 8.5L1 13" stroke="#666" stroke-width="1.3"/></svg>
  <div class="t" style="left:893px;top:175px;font-size:13px;color:#6d6d6d;transform:scaleX(0.861228);transform-origin:left top">실습14_Power BI 검색</div>
  <!-- nav pane -->
  <div class="a" style="left:1px;top:701.6px;width:247px;height:20px;background:#d9d9d9"></div>
  <svg class="a" style="left:43px;top:207.4px" width="16" height="15" viewBox="0 0 16 15"><path d="M8 1v10" stroke="#1a7ee0" stroke-width="1.6"/><path d="M8 1c2 2 4 3 4 6" stroke="#1a7ee0" stroke-width="1.4" fill="none"/><ellipse cx="5.5" cy="11.5" rx="3.5" ry="2.5" fill="#1a7ee0"/><path d="M0 14h15" stroke="#8cc4f5" stroke-width="1.5"/></svg>
  <div class="t nv" style="left:63.3px;top:209.9px;transform:scaleX(0.903846);transform-origin:left top">음악</div>
  <svg class="a" style="left:43px;top:235.3px" width="16" height="13" viewBox="0 0 16 13"><rect x="1.5" y="1.5" width="12" height="8" fill="#f2f4f8" stroke="#8597b3"/><path d="M3.5 5h4M3.5 7h6" stroke="#4a6590" stroke-width="1.2"/><path d="M0 11.5h16" stroke="#73b0ec" stroke-width="2"/></svg>
  <div class="t nv" style="left:63.3px;top:234.8px;transform:scaleX(0.947661);transform-origin:left top">저장된 사진</div>
  <svg class="a" style="left:43px;top:260.2px" width="16" height="13" viewBox="0 0 16 13"><rect x="1.5" y="1.5" width="12" height="8" fill="#f2f4f8" stroke="#8597b3"/><path d="M3.5 5h4M3.5 7h6" stroke="#4a6590" stroke-width="1.2"/><path d="M0 11.5h16" stroke="#73b0ec" stroke-width="2"/></svg>
  <div class="t nv" style="left:63.3px;top:259.8px;transform:scaleX(0.947661);transform-origin:left top">카메라 앨범</div>
  <svg class="a" style="left:34px;top:282.1px" width="16" height="15" viewBox="0 0 16 15"><circle cx="9" cy="6" r="5.5" fill="#3f8fd8"/><path d="M4 6c2-1 6 1 10 0" stroke="#9fd0fb" stroke-width="1.2" fill="none"/><path d="M0 11c3-2 9-1 12 0l-1 3H1z" fill="#5aa3e6"/></svg>
  <div class="t nv" style="left:55.4px;top:284.6px;transform:scaleX(0.915385);transform-origin:left top">네트워크</div>
  <svg class="a" style="left:34px;top:308.1px" width="16" height="13" viewBox="0 0 16 13"><rect x="0.5" y="0.5" width="15" height="12" fill="#6fb6f0" stroke="#2b7dcc"/><rect x="2" y="3" width="12" height="7" fill="#e8f3fd"/><circle cx="5" cy="6" r="2" fill="#2e9a6b"/><path d="M8.5 5h4M8.5 7h4" stroke="#2b7dcc"/></svg>
  <div class="t nv" style="left:55.4px;top:309.6px;transform:scaleX(0.889744);transform-origin:left top">제어판</div>
  <svg class="a" style="left:34px;top:331.9px" width="14" height="16" viewBox="0 0 14 16"><path d="M1 2l12 0-1.5 13.5h-9z" fill="#e3e7ec" stroke="#b7bec8"/><circle cx="6" cy="8.5" r="2.5" fill="#3d8be0"/></svg>
  <div class="t nv" style="left:55.4px;top:334.4px">휴지통</div>
  <svg class="a" style="left:35px;top:357.8px" width="11" height="14" viewBox="0 0 11 14"><path d="M0.5 2h4l1 1.5h5v10H0.5z" fill="#fbe29a"/><path d="M0.5 1h4.5v12.5H0.5z" fill="#efc55c"/></svg>
  <div class="t nv" style="left:54.7px;top:359.3px;transform:scaleX(0.932218);transform-origin:left top">DSE Lv.1 과정-실습자료_v1.5</div>
  <svg class="a" style="left:44px;top:382.7px" width="11" height="14" viewBox="0 0 11 14"><path d="M0.5 2h4l1 1.5h5v10H0.5z" fill="#fbe29a"/><path d="M0.5 1h4.5v12.5H0.5z" fill="#efc55c"/></svg>
  <div class="t nv" style="left:62.2px;top:384.2px;transform:scaleX(0.98291);transform-origin:left top">03 실습 자료A</div>
  <svg class="a" style="left:52.6px;top:407.7px" width="11" height="14" viewBox="0 0 11 14"><path d="M0.5 2h4l1 1.5h5v10H0.5z" fill="#fbe29a"/><path d="M0.5 1h4.5v12.5H0.5z" fill="#efc55c"/></svg>
  <div class="t nv" style="left:71.9px;top:409.2px;transform:scaleX(0.932652);transform-origin:left top">실습01_데이터 모델링</div>
  <svg class="a" style="left:52.6px;top:432.6px" width="11" height="14" viewBox="0 0 11 14"><path d="M0.5 2h4l1 1.5h5v10H0.5z" fill="#fbe29a"/><path d="M0.5 1h4.5v12.5H0.5z" fill="#efc55c"/></svg>
  <div class="t nv" style="left:71.9px;top:434.1px;transform:scaleX(0.950762);transform-origin:left top">실습02_통계 분석의 기본 정리</div>
  <svg class="a" style="left:52.6px;top:457.4px" width="11" height="14" viewBox="0 0 11 14"><path d="M0.5 2h4l1 1.5h5v10H0.5z" fill="#fbe29a"/><path d="M0.5 1h4.5v12.5H0.5z" fill="#efc55c"/></svg>
  <div class="t nv" style="left:71.9px;top:458.9px;transform:scaleX(0.939213);transform-origin:left top">실습03_통계 분석 실무</div>
  <svg class="a" style="left:52.6px;top:482.3px" width="11" height="14" viewBox="0 0 11 14"><path d="M0.5 2h4l1 1.5h5v10H0.5z" fill="#fbe29a"/><path d="M0.5 1h4.5v12.5H0.5z" fill="#efc55c"/></svg>
  <div class="t nv" style="left:71.9px;top:483.8px;transform:scaleX(0.950495);transform-origin:left top">실습04_데이터 전처리 입문</div>
  <svg class="a" style="left:52.6px;top:507.2px" width="11" height="14" viewBox="0 0 11 14"><path d="M0.5 2h4l1 1.5h5v10H0.5z" fill="#fbe29a"/><path d="M0.5 1h4.5v12.5H0.5z" fill="#efc55c"/></svg>
  <div class="t nv" style="left:71.9px;top:508.8px;transform:scaleX(0.952483);transform-origin:left top">실습05_데이터 관리 유형 이해</div>
  <svg class="a" style="left:52.6px;top:532.2px" width="11" height="14" viewBox="0 0 11 14"><path d="M0.5 2h4l1 1.5h5v10H0.5z" fill="#fbe29a"/><path d="M0.5 1h4.5v12.5H0.5z" fill="#efc55c"/></svg>
  <div class="t nv" style="left:71.9px;top:533.7px;transform:scaleX(0.939359);transform-origin:left top">실습06_KPI 도출 및 분석</div>
  <svg class="a" style="left:52.6px;top:557.0px" width="11" height="14" viewBox="0 0 11 14"><path d="M0.5 2h4l1 1.5h5v10H0.5z" fill="#fbe29a"/><path d="M0.5 1h4.5v12.5H0.5z" fill="#efc55c"/></svg>
  <div class="t nv" style="left:71.9px;top:558.5px;transform:scaleX(0.944158);transform-origin:left top">실습07_비즈니스 분석 실무</div>
  <svg class="a" style="left:52.6px;top:582.0px" width="11" height="14" viewBox="0 0 11 14"><path d="M0.5 2h4l1 1.5h5v10H0.5z" fill="#fbe29a"/><path d="M0.5 1h4.5v12.5H0.5z" fill="#efc55c"/></svg>
  <div class="t nv" style="left:71.9px;top:583.5px;transform:scaleX(0.935465);transform-origin:left top">실습08_베이즈 통계</div>
  <svg class="a" style="left:52.6px;top:606.9px" width="11" height="14" viewBox="0 0 11 14"><path d="M0.5 2h4l1 1.5h5v10H0.5z" fill="#fbe29a"/><path d="M0.5 1h4.5v12.5H0.5z" fill="#efc55c"/></svg>
  <div class="t nv" style="left:71.9px;top:608.4px;transform:scaleX(0.933431);transform-origin:left top">실습09_머신러닝 입문</div>
  <svg class="a" style="left:52.6px;top:631.8px" width="11" height="14" viewBox="0 0 11 14"><path d="M0.5 2h4l1 1.5h5v10H0.5z" fill="#fbe29a"/><path d="M0.5 1h4.5v12.5H0.5z" fill="#efc55c"/></svg>
  <div class="t nv" style="left:71.9px;top:633.2px;transform:scaleX(0.933333);transform-origin:left top">실습10_Excel Core</div>
  <svg class="a" style="left:52.6px;top:656.7px" width="11" height="14" viewBox="0 0 11 14"><path d="M0.5 2h4l1 1.5h5v10H0.5z" fill="#fbe29a"/><path d="M0.5 1h4.5v12.5H0.5z" fill="#efc55c"/></svg>
  <div class="t nv" style="left:71.9px;top:658.2px;transform:scaleX(0.969085);transform-origin:left top">실습11_Power Query</div>
  <svg class="a" style="left:52.6px;top:681.5px" width="11" height="14" viewBox="0 0 11 14"><path d="M0.5 2h4l1 1.5h5v10H0.5z" fill="#fbe29a"/><path d="M0.5 1h4.5v12.5H0.5z" fill="#efc55c"/></svg>
  <div class="t nv" style="left:71.9px;top:683.0px;transform:scaleX(0.961585);transform-origin:left top">실습13_Power Pivot</div>
  <svg class="a" style="left:52.6px;top:706.5px" width="11" height="14" viewBox="0 0 11 14"><path d="M0.5 2h4l1 1.5h5v10H0.5z" fill="#fbe29a"/><path d="M0.5 1h4.5v12.5H0.5z" fill="#efc55c"/></svg>
  <div class="t nv" style="left:71.9px;top:708.0px;transform:scaleX(0.941809);transform-origin:left top">실습14_Power BI</div>
  <div class="a" style="left:249px;top:203px;width:16px;height:518px;background:#f0f0f0"></div>
  <div class="a" style="left:249px;top:535px;width:16px;height:137px;background:#cdcdcd"></div>
  <svg class="a" style="left:252px;top:210px" width="10" height="7" viewBox="0 0 10 7"><path d="M1 6l4-4 4 4" stroke="#606060" stroke-width="1.3" fill="none"/></svg>
  <svg class="a" style="left:252px;top:709px" width="10" height="7" viewBox="0 0 10 7"><path d="M1 1l4 4 4-4" stroke="#606060" stroke-width="1.3" fill="none"/></svg>
  <!-- file list -->
  <div class="a" style="left:281px;top:210px;width:14px;height:14px;border:1px solid #6a6a6a"></div>
  <div class="t hd" style="left:306px;top:210px;transform:scaleX(0.903846);transform-origin:left top">이름</div>
  <svg class="a" style="left:411px;top:204px" width="10" height="6" viewBox="0 0 10 6"><path d="M1 5l4-4 4 4" stroke="#999" fill="none"/></svg>
  <div class="a" style="left:551px;top:204px;width:1px;height:26px;background:#e5e5e5"></div>
  <div class="a" style="left:700px;top:204px;width:1px;height:26px;background:#e5e5e5"></div>
  <div class="a" style="left:824px;top:204px;width:1px;height:26px;background:#e5e5e5"></div>
  <div class="a" style="left:907px;top:204px;width:1px;height:26px;background:#e5e5e5"></div>
  <div class="t hd" style="left:557px;top:210px;transform:scaleX(0.965184);transform-origin:left top">수정한 날짜</div>
  <div class="t hd" style="left:707px;top:210px;transform:scaleX(0.915385);transform-origin:left top">유형</div>
  <div class="t hd" style="left:831px;top:210px;transform:scaleX(0.915385);transform-origin:left top">크기</div>
  <div class="a" style="left:285px;top:281px;width:619px;height:23px;border:1px solid #a9d3f5"></div>
  <svg class="a" style="left:305px;top:239.5px" width="14" height="16" viewBox="0 0 14 16"><path d="M2.5 0.5h7l3.5 3.5v11.5H2.5z" fill="#fff" stroke="#c9c9c9"/><circle cx="3" cy="10" r="2.5" fill="#d7d7d7"/></svg>
  <div class="t fn" style="left:325.6px;top:242.5px;transform:scaleX(1.01396);transform-origin:left top">desktop.ini</div>
  <div class="t fd" style="left:557.5px;top:242.5px;transform:scaleX(0.983104);transform-origin:left top">2020-09-24 오후 11:10</div>
  <div class="t fd" style="left:706.8px;top:242.5px;transform:scaleX(0.955224);transform-origin:left top">구성 설정</div>
  <div class="t fd" style="left:878.6px;top:242.5px;transform:scaleX(0.879841);transform-origin:left top">1KB</div>
  <svg class="a" style="left:305px;top:262.3px" width="14" height="16" viewBox="0 0 14 16"><path d="M1.5 0.5h8l3.5 3.5v11.5H1.5z" fill="#fff" stroke="#9a9a9a"/><rect x="4" y="5" width="6" height="6" fill="#1d6ed6"/><path d="M4 11l3-3 3 3z" fill="#0c3e8a"/></svg>
  <div class="t fn" style="left:325.6px;top:265.3px;transform:scaleX(0.989129);transform-origin:left top">ms_logo.png</div>
  <div class="t fd" style="left:557.5px;top:265.3px;transform:scaleX(0.975097);transform-origin:left top">2017-08-31 오후 3:50</div>
  <div class="t fd" style="left:706.8px;top:265.3px;transform:scaleX(0.954696);transform-origin:left top">PNG 파일</div>
  <div class="t fd" style="left:878.6px;top:265.3px;transform:scaleX(0.879841);transform-origin:left top">6KB</div>
  <svg class="a" style="left:304px;top:284.2px" width="16" height="16" viewBox="0 0 16 16"><path d="M4.5 0.5h7l3.5 3.5v11.5h-11z" fill="#fff" stroke="#bbb"/><rect x="0" y="4" width="10" height="9" fill="#e8b723"/><path d="M2 11V8M4.5 11V6M7 11V9" stroke="#333" stroke-width="1.3"/><rect x="9" y="12" width="6" height="3" fill="#777"/></svg>
  <div class="t fn" style="left:325.6px;top:287.2px;transform:scaleX(0.96247);transform-origin:left top">매출분석보고서.pbix</div>
  <div class="t fd" style="left:557.5px;top:287.2px;transform:scaleX(0.975097);transform-origin:left top">2020-03-10 오후 8:59</div>
  <div class="t fd" style="left:706.8px;top:287.2px;transform:scaleX(0.996135);transform-origin:left top">Microsoft Power ...</div>
  <div class="t fd" style="left:865.1px;top:287.2px;transform:scaleX(0.913905);transform-origin:left top">281KB</div>
  <svg class="a" style="left:304px;top:306.9px" width="16" height="16" viewBox="0 0 16 16"><path d="M4.5 0.5h7l3.5 3.5v11.5h-11z" fill="#fff" stroke="#888"/><rect x="0" y="3.5" width="9" height="9" fill="#1d7a43"/><path d="M2.5 5.5l4 5M6.5 5.5l-4 5" stroke="#fff" stroke-width="1.5"/><path d="M10 6h3M10 8h3M10 10h3" stroke="#1d7a43"/></svg>
  <div class="t fn" style="left:325.6px;top:309.9px;transform:scaleX(0.928571);transform-origin:left top">판매관리.xlsx</div>
  <div class="t fd" style="left:557.5px;top:309.9px;transform:scaleX(0.970147);transform-origin:left top">2020-05-02 오후 2:07</div>
  <div class="t fd" style="left:706.8px;top:309.9px;transform:scaleX(0.975451);transform-origin:left top">Microsoft Excel 워...</div>
  <div class="t fd" style="left:865.1px;top:309.9px;transform:scaleX(0.913905);transform-origin:left top">398KB</div>
  <!-- status bar -->
  <div class="t" style="left:14px;top:727px;font-size:12.5px;color:#444;transform:scaleX(0.960809);transform-origin:left top">4개 항목</div>
  <div class="a" style="left:1079px;top:721px;width:24px;height:25px;background:#d0e6f7;border:1px solid #8fc3e6;border-bottom:none;border-radius:2px 2px 0 0"></div>
  <svg class="a" style="left:1084px;top:727px" width="14" height="14" viewBox="0 0 14 14"><rect x="0.5" y="0.5" width="5" height="13" rx="2" fill="#fff" stroke="#999"/><circle cx="3" cy="3" r="1.2" fill="#555"/><circle cx="3" cy="7" r="1.2" fill="#555"/><circle cx="3" cy="11" r="1.3" fill="#222"/><path d="M6.5 2.5h3M10.5 2.5h3M6.5 6.5h3M10.5 6.5h3M6.5 10.5h3M10.5 10.5h3" stroke="#4f5a66" stroke-width="1.2"/></svg>
  <svg class="a" style="left:1107px;top:727px" width="15" height="12" viewBox="0 0 15 12"><rect x="0.5" y="0.5" width="14" height="11" fill="#fff" stroke="#8a8a8a"/><rect x="2" y="2" width="11" height="8" fill="#6aa0e8"/><rect x="2" y="2" width="11" height="3" fill="#3d6fd8"/><path d="M2 10V5l2 1 2 2 3 0 4 2z" fill="#3f5a5e"/></svg>
</div>

<svg class="a" style="left:1114px;top:681px;z-index:50" width="12" height="18" viewBox="0 0 12 18"><path d="M1 1v14l3.5-3.2 2.3 5 2-.9-2.2-4.9H11z" fill="#fff" stroke="#222" stroke-width="1" stroke-linejoin="round"/></svg>
<!-- RIGHT PANEL -->
<div id="rp">
  <svg class="a" style="left:20px;top:17px" width="9" height="6" viewBox="0 0 9 6"><path d="M1 1l3.5 3.5L8 1" stroke="#5b5b6b" stroke-width="1.3" fill="none"/></svg>
  <div class="t" style="left:160.5px;top:12px;font-size:13.5px;font-weight:bold;color:#232333;transform:translateX(-50%) scaleX(0.943716);transform-origin:center top">참가자(51)</div>
  <div class="a" style="left:23px;top:48px;width:275px;height:25px;border-radius:7px;background:#f0f0f4"></div>
  <div class="a" style="left:24px;top:49px;width:135px;height:23px;border-radius:6px;background:#fff;box-shadow:0 0 1px rgba(0,0,0,.25)"></div>
  <div class="t" style="left:91.5px;top:55px;font-size:12px;color:#0e71eb;transform:translateX(-50%) scaleX(0.927536);transform-origin:center top">토론자(4)</div>
  <div class="t" style="left:228.3px;top:55px;font-size:12px;color:#555566;transform:translateX(-50%) scaleX(0.913787);transform-origin:center top">참석자(47)</div>
  <!-- participants -->
  <div class="a" style="left:19px;top:92px;width:25px;height:25px;border-radius:6px;background:#1f9c7c;color:#fff;font-size:13px;text-align:center;line-height:25px">마</div>
  <div class="t" style="left:57.4px;top:97px;font-size:14px;color:#232333;transform:scaleX(0.912647);transform-origin:left top">마소캠퍼스TA (나)</div>
  <svg class="a" style="left:264px;top:96px" width="17" height="17" viewBox="0 0 17 17"><rect x="6" y="1.5" width="5" height="9" rx="2.5" fill="none" stroke="#e5262a" stroke-width="1.1"/><path d="M3.5 8a5 5 0 0 0 10 0M8.5 13v2.5M6 15.5h5" stroke="#e5262a" stroke-width="1.1" fill="none"/><path d="M1 16.5L16 1" stroke="#e5262a" stroke-width="1.2"/></svg><svg class="a" style="left:287px;top:96px" width="18" height="17" viewBox="0 0 18 17"><rect x="1" y="4.5" width="11" height="9" rx="1" fill="none" stroke="#e5262a" stroke-width="1.1"/><path d="M12 7.5l5-3v9l-5-3" fill="none" stroke="#e5262a" stroke-width="1.1"/><path d="M1 16.5L17 1" stroke="#e5262a" stroke-width="1.2"/></svg>
  <div class="a" style="left:18px;top:135px;width:26px;height:24px;border-radius:6px;overflow:hidden;background:linear-gradient(180deg,#fff 35%,#d9e8f7)">
    <div class="t" style="left:1px;top:8px;font-size:5px;font-weight:bold;color:#c8202a">MASO <span style="color:#444;font-size:4px">CAMPU</span></div>
    <svg class="a" style="left:0;top:12px" width="26" height="12" viewBox="0 0 26 12"><path d="M0 0C8 5 16 9 26 12H8L0 6z" fill="#8bb9e8" opacity=".7"/></svg></div>
  <div class="t" style="left:57.4px;top:139px;font-size:14px;color:#232333;transform:scaleX(0.944549);transform-origin:left top">Masocampus MM (호스트)</div>
  <svg class="a" style="left:240px;top:140px" width="17" height="12" viewBox="0 0 17 12"><path d="M4 11.5a3.5 3.5 0 0 1 0-7 4.5 4.5 0 0 1 8.5-1 3.5 3.5 0 0 1 1 8z" fill="#fff" stroke="#6e7680" stroke-width="1.1"/><circle cx="8.5" cy="7.5" r="2" fill="#e5262a"/></svg><svg class="a" style="left:264px;top:138px" width="17" height="17" viewBox="0 0 17 17"><rect x="6" y="1.5" width="5" height="9" rx="2.5" fill="none" stroke="#e5262a" stroke-width="1.1"/><path d="M3.5 8a5 5 0 0 0 10 0M8.5 13v2.5M6 15.5h5" stroke="#e5262a" stroke-width="1.1" fill="none"/><path d="M1 16.5L16 1" stroke="#e5262a" stroke-width="1.2"/></svg><svg class="a" style="left:287px;top:138px" width="18" height="17" viewBox="0 0 18 17"><rect x="1" y="4.5" width="11" height="9" rx="1" fill="none" stroke="#e5262a" stroke-width="1.1"/><path d="M12 7.5l5-3v9l-5-3" fill="none" stroke="#e5262a" stroke-width="1.1"/><path d="M1 16.5L17 1" stroke="#e5262a" stroke-width="1.2"/></svg>
  <div class="a" style="left:19px;top:174px;width:25px;height:25px;border-radius:6px;background:#1f9c7c;color:#fff;font-size:13px;text-align:center;line-height:25px">송</div>
  <div class="a" style="left:240px;top:181px;width:16px;height:12px;border-radius:2px;background:#1ca83a"></div>
  <svg class="a" style="left:244px;top:183px" width="8" height="8" viewBox="0 0 8 8"><path d="M4 7.5V1.5M1.5 4L4 1.5 6.5 4" stroke="#fff" stroke-width="1.4" fill="none"/></svg>
  <svg class="a" style="left:266px;top:179px" width="11" height="17" viewBox="0 0 11 17"><rect x="3" y="1" width="5" height="9" rx="2.5" fill="#fff" stroke="#6e7680" stroke-width="1.1"/><path d="M1 8a4.5 4.5 0 0 0 9 0M5.5 12.5v3M3 15.5h5" stroke="#6e7680" stroke-width="1.1" fill="none"/></svg>
  <svg class="a" style="left:287px;top:179px" width="18" height="17" viewBox="0 0 18 17"><rect x="1" y="4.5" width="11" height="9" rx="1" fill="none" stroke="#e5262a" stroke-width="1.1"/><path d="M12 7.5l5-3v9l-5-3" fill="none" stroke="#e5262a" stroke-width="1.1"/><path d="M1 16.5L17 1" stroke="#e5262a" stroke-width="1.2"/></svg>
  <div class="a" style="left:18px;top:216px;width:26px;height:24px;border-radius:6px;overflow:hidden;background:linear-gradient(180deg,#fff 35%,#d9e8f7)">
    <div class="t" style="left:1px;top:8px;font-size:5px;font-weight:bold;color:#c8202a">MASO <span style="color:#444;font-size:4px">CAMPU</span></div>
    <svg class="a" style="left:0;top:12px" width="26" height="12" viewBox="0 0 26 12"><path d="M0 0C8 5 16 9 26 12H8L0 6z" fill="#8bb9e8" opacity=".7"/></svg></div>
  <div class="t" style="left:57.4px;top:221px;font-size:14px;color:#232333;transform:scaleX(0.910672);transform-origin:left top">Masocampus ...</div>
  <div class="t" style="left:159px;top:220px;font-size:14px;color:#232333;transform:scaleX(0.925272);transform-origin:left top">(공동 호스트)</div>
  <svg class="a" style="left:240px;top:222px" width="17" height="12" viewBox="0 0 17 12"><path d="M4 11.5a3.5 3.5 0 0 1 0-7 4.5 4.5 0 0 1 8.5-1 3.5 3.5 0 0 1 1 8z" fill="#fff" stroke="#6e7680" stroke-width="1.1"/><circle cx="8.5" cy="7.5" r="2" fill="#e5262a"/></svg><svg class="a" style="left:264px;top:220px" width="17" height="17" viewBox="0 0 17 17"><rect x="6" y="1.5" width="5" height="9" rx="2.5" fill="none" stroke="#e5262a" stroke-width="1.1"/><path d="M3.5 8a5 5 0 0 0 10 0M8.5 13v2.5M6 15.5h5" stroke="#e5262a" stroke-width="1.1" fill="none"/><path d="M1 16.5L16 1" stroke="#e5262a" stroke-width="1.2"/></svg><svg class="a" style="left:287px;top:220px" width="18" height="17" viewBox="0 0 18 17"><rect x="1" y="4.5" width="11" height="9" rx="1" fill="none" stroke="#e5262a" stroke-width="1.1"/><path d="M12 7.5l5-3v9l-5-3" fill="none" stroke="#e5262a" stroke-width="1.1"/><path d="M1 16.5L17 1" stroke="#e5262a" stroke-width="1.2"/></svg>
  <!-- buttons -->
  <div class="a" style="left:32px;top:268px;width:39px;height:23px;border-radius:6px;background:#f0f0f4"></div>
  <div class="t" style="left:51.5px;top:273px;font-size:12.5px;color:#232333;transform:translateX(-50%) scaleX(0.884615);transform-origin:center top">초대</div>
  <div class="a" style="left:102px;top:268px;width:105px;height:23px;border-radius:6px;background:#f0f0f4"></div>
  <div class="t" style="left:154.2px;top:273px;font-size:12.5px;color:#232333;transform:translateX(-50%) scaleX(0.913702);transform-origin:center top">나만 음소거 해제</div>
  <div class="a" style="left:238px;top:268px;width:51px;height:23px;border-radius:6px;background:#f0f0f4"></div>
  <div class="t" style="left:263.5px;top:273px;font-size:12.5px;color:#232333;transform:translateX(-50%) scaleX(0.910256);transform-origin:center top">손들기</div>
  <div class="a" style="left:21px;top:305px;width:298px;height:1px;background:#e9e9ed"></div>
  <svg class="a" style="left:20px;top:325px" width="9" height="6" viewBox="0 0 9 6"><path d="M1 1l3.5 3.5L8 1" stroke="#5b5b6b" stroke-width="1.3" fill="none"/></svg>
  <div class="t" style="left:160.2px;top:319.5px;font-size:13.5px;font-weight:bold;color:#232333;transform:translateX(-50%) scaleX(0.957549);transform-origin:center top">Zoom 웨비나 채팅</div>
  <!-- chat -->
  <div class="a" style="left:310px;top:350px;width:8px;height:340px;border-radius:4px;background:#f1f1f5"></div>
  <div class="a" style="left:310px;top:682px;width:8px;height:8px;border-radius:50%;background:#a3a3ad"></div>
  <div class="cm" style="top:351px">전처리가 끝나면 닫기 및 적용</div>
  <div class="cm" style="top:376px">데이터 창에서 확인 가능합니다.</div>
  <div class="cm" style="top:401px">세번째 아이콘 클릭</div>
  <div class="cm" style="top:426px">카디널리티 수정 가능</div>
  <div class="cm" style="top:451px">시각화 부분에서 제일 첫번째 아이콘 클</div>
  <div class="cm" style="top:476px">릭</div>
  <div class="cm" style="top:501px">분류명을 축에 매출금액을 값에 드래그</div>
  <div class="cm" style="top:526px">드랍</div>
  <div class="cm" style="top:551px">채널을 범례에 드래그 드랍</div>
  <div class="t" style="left:19.5px;top:586.5px;font-size:12px;color:#747487">발신자</div>
  <div class="t" style="left:91.5px;top:586.5px;font-size:12px;color:#747487">수신자<span style="color:#0e71eb">모든 토론자 및 참석자:</span></div>
  <div class="cm" style="top:607px">파워bi에는 편집창 외에 프레젠테이션 화</div>
  <div class="cm" style="top:632px">면이 있나요? 아니면 다른 플랫폼으로 연</div>
  <div class="cm" style="top:657px">동해서 쓸 수 있는 방법이 있을까요?</div>
  <div class="a" style="left:1px;top:692px;width:318px;height:1px;background:#e9e9ed"></div>
  <div class="t" style="left:17.5px;top:708.5px;font-size:12.5px;color:#232333;transform:scaleX(0.907501);transform-origin:left top">받는 사람:</div>
  <div class="a" style="left:80px;top:704px;width:135px;height:24px;border-radius:6px;background:#f0f0f4"></div>
  <div class="t" style="left:87px;top:708.5px;font-size:12.5px;color:#232333;transform:scaleX(0.850717);transform-origin:left top">모든 토론자 및 참석자</div>
  <svg class="a" style="left:199px;top:713px" width="9" height="6" viewBox="0 0 9 6"><path d="M1 1l3.5 3.5L8 1" stroke="#232333" stroke-width="1.5" fill="none"/></svg>
  <div class="a" style="left:281px;top:704px;width:24px;height:24px;border-radius:5px;border:1px solid #dcdce3"></div>
  <div class="a" style="left:288px;top:715px;width:2px;height:2px;background:#666;border-radius:1px;box-shadow:4px 0 0 #666,8px 0 0 #666"></div>
  <div class="a" style="left:17px;top:734px;width:1px;height:16px;background:#111"></div>
  <div class="t" style="left:19.7px;top:735px;font-size:13.5px;color:#9b9baa;transform:scaleX(0.899319);transform-origin:left top">여기에 메시지 입력...</div>
</div>

<!-- TOOLBAR -->
<div id="tb">
  <svg class="a" style="left:34px;top:4.0px" width="25" height="24" viewBox="0 0 25 24"><rect x="8" y="1" width="9" height="13" rx="4.5" fill="#b3b3b3"/><path d="M5 10a7.5 7.5 0 0 0 15 0M12.5 17.5v4M8 22h9" stroke="#b3b3b3" stroke-width="1.8" fill="none"/><path d="M1 23.5L23.5 1" stroke="#e5484d" stroke-width="1.8"/></svg>
  <svg class="a" style="left:73px;top:13.0px" width="9" height="6" viewBox="0 0 9 6"><path d="M1 5l3.5-3.5L8 5" stroke="#b3b3b3" stroke-width="1.3" fill="none"/></svg>
  <div class="t" style="left:45.35px;top:32.5px;font-size:12px;color:#c6c6c6;transform:translateX(-50%) scaleX(0.983522);transform-origin:center top">음소거 해제</div>
  <svg class="a" style="left:126px;top:3.0px" width="26" height="25" viewBox="0 0 26 25"><rect x="1" y="7" width="17" height="13" rx="3" fill="#b3b3b3"/><path d="M18 11l6-3.5v12L18 16z" fill="#b3b3b3"/><path d="M1.5 24L24.5 1" stroke="#e5484d" stroke-width="1.8"/></svg>
  <svg class="a" style="left:172px;top:13.0px" width="9" height="6" viewBox="0 0 9 6"><path d="M1 5l3.5-3.5L8 5" stroke="#b3b3b3" stroke-width="1.3" fill="none"/></svg>
  <div class="t" style="left:138.55px;top:32.5px;font-size:12px;color:#c6c6c6;transform:translateX(-50%) scaleX(0.97405);transform-origin:center top">비디오 시작</div>
  <svg class="a" style="left:663px;top:8.0px" width="25" height="19" viewBox="0 0 25 19"><circle cx="8" cy="5" r="4" fill="#b3b3b3"/><path d="M0 18c0-5 3-7.5 8-7.5s8 2.5 8 7.5z" fill="#b3b3b3"/><circle cx="17.5" cy="7" r="3.5" fill="#b3b3b3"/><path d="M12 18c0-4 2.5-6.5 5.5-6.5S24 14 24 18z" fill="#b3b3b3"/></svg>
  <div class="t" style="left:689px;top:10.0px;font-size:11.5px;color:#c6c6c6">51</div>
  <div class="t" style="left:675px;top:32.5px;font-size:12px;color:#c6c6c6;transform:translateX(-50%) scaleX(0.972222);transform-origin:center top">참가자</div>
  <svg class="a" style="left:747px;top:9.0px" width="26" height="19" viewBox="0 0 26 19"><path d="M9 1h14a2 2 0 0 1 2 2v7a2 2 0 0 1-2 2h-1l-2 3-1-3H9z" fill="#9a9a9a"/><path d="M2 5h13a2 2 0 0 1 2 2v7a2 2 0 0 1-2 2H8l-3 3v-3H2a2 2 0 0 1-2-2V7a2 2 0 0 1 2-2z" fill="#b3b3b3" stroke="#1a1a1a" stroke-width="1"/></svg>
  <div class="a" style="left:769px;top:3.0px;width:16px;height:14px;border-radius:7px;background:#e5393d"></div>
  <div class="t" style="left:777px;top:5.0px;font-size:11px;color:#fff;transform:translateX(-50%)">2</div>
  <div class="t" style="left:759.85px;top:32.5px;font-size:12px;color:#c6c6c6;transform:translateX(-50%) scaleX(1.02984);transform-origin:center top">Q&amp;A</div>
  <svg class="a" style="left:829px;top:8.0px" width="22" height="20" viewBox="0 0 22 20"><path d="M3 1h16a2.5 2.5 0 0 1 2.5 2.5v9A2.5 2.5 0 0 1 19 15H9l-4 4v-4H3A2.5 2.5 0 0 1 .5 12.5v-9A2.5 2.5 0 0 1 3 1z" fill="#b3b3b3"/></svg>
  <div class="t" style="left:839.5px;top:32.5px;font-size:12px;color:#c6c6c6;transform:translateX(-50%) scaleX(0.958333);transform-origin:center top">채팅</div>
  <div class="a" style="left:917px;top:8.0px;width:24px;height:18px;border-radius:3px;background:#22d05a"></div>
  <svg class="a" style="left:924px;top:11.0px" width="10" height="12" viewBox="0 0 10 12"><path d="M5 11V2M1.5 5.5L5 2l3.5 3.5" stroke="#111" stroke-width="2" fill="none"/></svg>
  <div class="t" style="left:928.3px;top:32.5px;font-size:12px;color:#23d05c;transform:translateX(-50%) scaleX(1.0011);transform-origin:center top">화면 공유</div>
  <div class="a" style="left:1008px;top:7.0px;width:21px;height:21px;border-radius:50%;border:2px solid #b3b3b3"></div>
  <div class="a" style="left:1011px;top:10.0px;width:15px;height:15px;border-radius:50%;background:#b3b3b3"></div>
  <div class="t" style="left:1018.1px;top:32.5px;font-size:12px;color:#c6c6c6;transform:translateX(-50%) scaleX(0.958333);transform-origin:center top">기록</div>
  <div class="a" style="left:1527px;top:13.0px;width:61px;height:27px;border-radius:6px;background:#b82427"></div>
  <div class="t" style="left:1556.6px;top:19.5px;font-size:12.5px;color:#fff;font-weight:bold;transform:translateX(-50%) scaleX(0.882051);transform-origin:center top">나가기</div>
</div>


</body></html>
